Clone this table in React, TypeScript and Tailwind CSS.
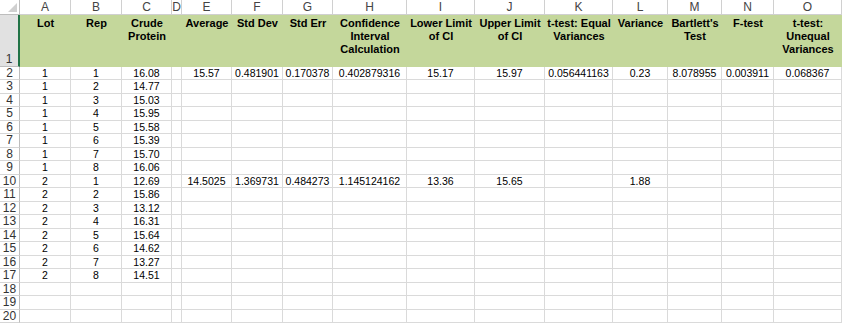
import React from "react";

const cols = ["A", "B", "C", "D", "E", "F", "G", "H", "I", "J", "K", "L", "M", "N", "O"];

const headers = [
  "Lot",
  "Rep",
  "Crude Protein",
  "",
  "Average",
  "Std Dev",
  "Std Err",
  "Confidence Interval Calculation",
  "Lower Limit of CI",
  "Upper Limit of CI",
  "t-test: Equal Variances",
  "Variance",
  "Bartlett's Test",
  "F-test",
  "t-test: Unequal Variances",
];

const protein = [
  "16.08", "14.77", "15.03", "15.95", "15.58", "15.39", "15.70", "16.06",
  "12.69", "15.86", "13.12", "16.31", "15.64", "14.62", "13.27", "14.51",
];

const stats: Record<number, string[]> = {
  0: ["15.57", "0.481901", "0.170378", "0.402879316", "15.17", "15.97", "0.056441163", "0.23", "8.078955", "0.003911", "0.068367"],
  8: ["14.5025", "1.369731", "0.484273", "1.145124162", "13.36", "15.65", "", "1.88", "", "", ""],
};

function rowCells(i: number): string[] {
  if (i >= protein.length) return Array(15).fill("");
  const lot = i < 8 ? "1" : "2";
  const rep = String((i % 8) + 1);
  const s = stats[i] ?? Array(11).fill("");
  return [lot, rep, protein[i], "", ...s];
}

export default function App() {
  const rows = Array.from({ length: 19 }, (_, i) => i);
  return (
    <div className="w-[842px] h-[324px] overflow-hidden bg-white font-['Liberation_Sans',Arial,sans-serif] text-[11px] text-black">
      <div className="grid grid-cols-[20px_51px_51px_50px_10px_50px_51px_50px_74px_68px_70px_68px_55px_54px_52px_68px]">
        {/* column letters */}
        <div className="h-[15px] border-r border-b border-[#bdbdbd] bg-white relative">
          <svg className="absolute right-[2px] bottom-[2px]" width="9" height="9" viewBox="0 0 9 9">
            <polygon points="9,0 9,9 0,9" fill="#d0d0d0" />
          </svg>
        </div>
        {cols.map((c) => (
          <div
            key={c}
            className="h-[15px] border-r border-b border-[#d0d0d0] bg-white text-[#444] text-center leading-[15px] text-[12px]"
          >
            {c}
          </div>
        ))}

        {/* header row 1 */}
        <div className="h-[52px] bg-[#e1e1e1] border-r-2 border-r-[#217346] border-b border-b-[#bdbdbd] flex items-end justify-center text-[#333] text-[12px] leading-[14px]">
          1
        </div>
        {headers.map((h, i) => (
          <div
            key={i}
            className="h-[52px] bg-[#c4d79b] text-center font-bold leading-[13px] pt-[2px] px-[1px]"
          >
            {h}
          </div>
        ))}

        {/* data rows */}
        {rows.map((r) => {
          const h = r % 2 === 0 ? "h-[13px]" : "h-[14px]";
          return (
            <React.Fragment key={r}>
              <div
                className={`${h} border-r border-b border-r-[#bdbdbd] border-b-[#d6d6d6] text-[#333] text-[12px] text-center leading-[13px]`}
              >
                {r + 2}
              </div>
              {rowCells(r).map((v, j) => (
                <div
                  key={j}
                  className={`${h} border-r border-b border-[#dadada] text-center text-[10.5px] leading-[13px] whitespace-nowrap overflow-hidden`}
                >
                  {v}
                </div>
              ))}
            </React.Fragment>
          );
        })}
      </div>
    </div>
  );
}
